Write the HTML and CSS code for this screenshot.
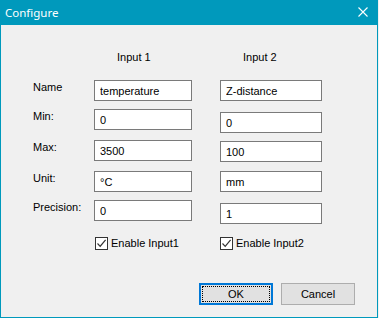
FILE: index.html
```html
<!DOCTYPE html>
<html lang="en">
<head>
    <meta charset="UTF-8">
    <title>Configure</title>
    <link rel="stylesheet" href="styles.css">
</head>
<body>
    <div class="window">
        <div class="titlebar">
            <span class="title">Configure</span>
            <button class="close" aria-label="Close">
                <svg width="10" height="10" viewBox="0 0 10 10">
                    <path d="M0.5 0.5 L9.5 9.5 M9.5 0.5 L0.5 9.5" stroke="#fff" stroke-width="1.1" fill="none"/>
                </svg>
            </button>
        </div>
        <div class="client">
            <div class="form">
                <div></div>
                <div class="col-head first">Input 1</div>
                <div class="col-head second">Input 2</div>

                <label class="field-label" for="name1">Name</label>
                <input class="field first" id="name1" type="text" value="temperature">
                <input class="field second" type="text" value="Z-distance">

                <label class="field-label" for="min1">Min:</label>
                <input class="field first" id="min1" type="text" value="0">
                <input class="field second nudge-3" type="text" value="0">

                <label class="field-label" for="max1">Max:</label>
                <input class="field first" id="max1" type="text" value="3500">
                <input class="field second nudge-1" type="text" value="100">

                <label class="field-label" for="unit1">Unit:</label>
                <input class="field first" id="unit1" type="text" value="°C">
                <input class="field second" type="text" value="mm">

                <label class="field-label" for="prec1">Precision:</label>
                <input class="field first" id="prec1" type="text" value="0">
                <input class="field second nudge-3" type="text" value="1">

                <div></div>
                <label class="check first">
                    <span class="box">
                        <svg width="11" height="11" viewBox="0 0 11 11">
                            <path d="M1.5 5.5 L4.2 8.3 L9.6 1.8" stroke="#333" stroke-width="1.2" fill="none"/>
                        </svg>
                    </span>
                    Enable Input1
                </label>
                <label class="check second">
                    <span class="box">
                        <svg width="11" height="11" viewBox="0 0 11 11">
                            <path d="M1.5 5.5 L4.2 8.3 L9.6 1.8" stroke="#333" stroke-width="1.2" fill="none"/>
                        </svg>
                    </span>
                    Enable Input2
                </label>
            </div>
            <div class="buttons">
                <button class="btn default">OK</button>
                <button class="btn">Cancel</button>
            </div>
        </div>
    </div>
</body>
</html>
```

FILE: styles.css
```css
:root {
    --accent: #0099bc;
    --face: #f0f0f0;
    --btn-face: #e1e1e1;
    --field-border: #7a7a7a;
}
* {
    box-sizing: border-box;
}
body {
    margin: 0;
    width: 379px;
    height: 318px;
    background-color: var(--face);
    font-family: 'Liberation Sans', Arial, sans-serif;
    font-size: 11px;
    color: #000;
}
.window {
    width: 378px;
    height: 318px;
    display: flex;
    flex-direction: column;
    background-color: var(--accent);
    padding: 0 1px 1px 1px;
}
.titlebar {
    height: 25px;
    display: flex;
    align-items: center;
    justify-content: space-between;
    color: #fff;
}
.title {
    font-family: 'Noto Sans', 'Open Sans', sans-serif;
    font-size: 11.5px;
    padding-left: 4px;
    padding-bottom: 1px;
}
.close {
    background: none;
    border: none;
    padding: 0;
    width: 10px;
    height: 10px;
    margin-right: 9px;
    margin-bottom: 1px;
    display: flex;
}
.client {
    flex: 1;
    display: flex;
    flex-direction: column;
    background-color: var(--face);
}
.form {
    display: grid;
    grid-template-columns: 61px 126px 102px;
    grid-template-rows: 29px 29px 31px 31px 29px 35px 16px;
    padding: 26px 0 0 32px;
}
.col-head.first {
    padding-left: 23px;
}
.col-head.second {
    padding-left: 23px;
}
.field-label {
    padding-top: 1px;
    line-height: 13px;
}
.field {
    height: 21px;
    border: 1px solid var(--field-border);
    background: #fff;
    font-family: inherit;
    font-size: 11px;
    color: #000;
    padding: 0 0 0 5px;
    margin: 0;
    outline: none;
}
.field.first {
    width: 98px;
}
.field.second {
    width: 102px;
}
.nudge-1 {
    margin-top: 1px;
}
.nudge-3 {
    margin-top: 3px;
}
.check {
    display: flex;
    align-items: center;
    gap: 3px;
    line-height: 13px;
}
.check.first {
    padding-left: 1px;
}
.box {
    width: 13px;
    height: 13px;
    border: 1px solid #333;
    background: #fff;
    display: flex;
    align-items: center;
    justify-content: center;
}
.buttons {
    margin-top: auto;
    margin-bottom: 12px;
    display: flex;
    justify-content: flex-end;
    gap: 8px;
    padding-right: 22px;
}
.btn {
    width: 74px;
    height: 22px;
    background-color: var(--btn-face);
    border: 1px solid #adadad;
    font-family: inherit;
    font-size: 11px;
    color: #000;
    padding: 0;
}
.btn.default {
    border: 2px solid #0078d7;
    outline: 1px dotted #000;
    outline-offset: -4px;
}
```
